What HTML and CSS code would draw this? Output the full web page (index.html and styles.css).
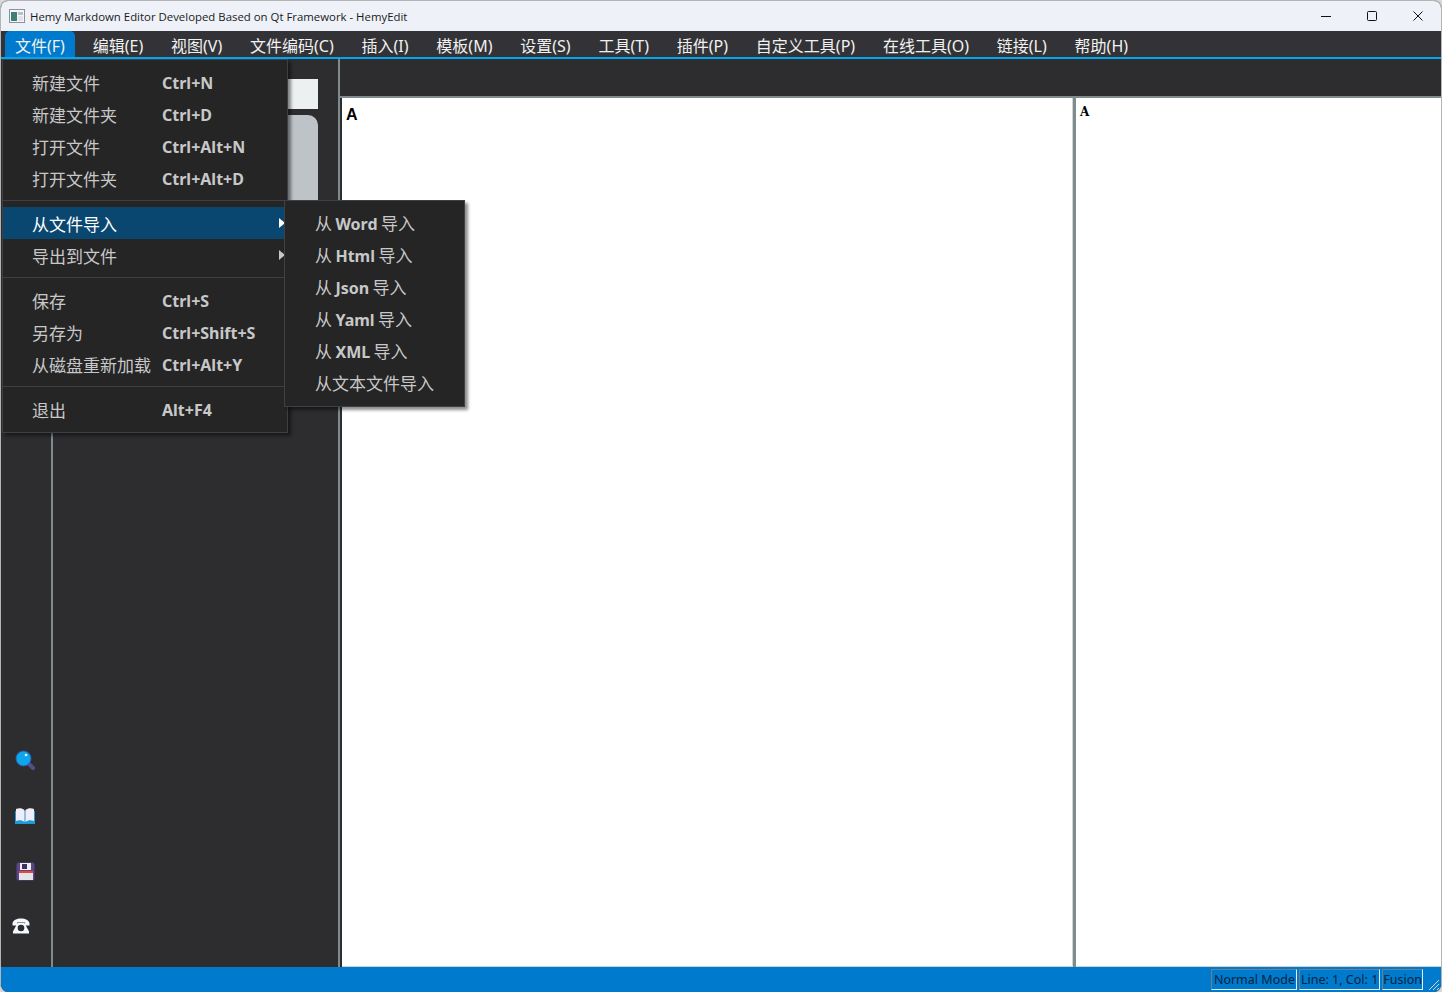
FILE: index.html
```html
<!DOCTYPE html>
<html lang="zh-CN">
<head>
  <meta charset="UTF-8">
  <title>HemyEdit</title>
  <link rel="stylesheet" href="styles.css">
</head>
<body>
  <div class="window">
    <div class="titlebar">
      <svg class="app-icon" width="16" height="14" viewBox="0 0 16 14">
        <rect x="0.5" y="0.5" width="15" height="13" fill="#f4f6f8" stroke="#8d9296"/>
        <rect x="2" y="3" width="6" height="9" fill="#3f7f78"/>
        <rect x="9" y="3" width="5" height="3" fill="#b9c2c8"/>
        <rect x="9" y="7" width="5" height="5" fill="#dfe4e8"/>
      </svg>
      <span class="title-text">Hemy Markdown Editor Developed Based on Qt Framework - HemyEdit</span>
      <div class="win-btns">
        <svg width="12" height="12" viewBox="0 0 12 12"><path d="M1 6.5h10" stroke="#111" fill="none"/></svg>
        <svg width="12" height="12" viewBox="0 0 12 12"><rect x="1.5" y="1.5" width="9" height="9" rx="1" stroke="#111" fill="none"/></svg>
        <svg width="12" height="12" viewBox="0 0 12 12"><path d="M1.5 1.5l9 9M10.5 1.5l-9 9" stroke="#111" fill="none"/></svg>
      </div>
    </div>

    <div class="menubar">
      <span class="menu-title active">文件(F)</span>
      <span class="menu-title">编辑(E)</span>
      <span class="menu-title">视图(V)</span>
      <span class="menu-title">文件编码(C)</span>
      <span class="menu-title">插入(I)</span>
      <span class="menu-title">模板(M)</span>
      <span class="menu-title">设置(S)</span>
      <span class="menu-title">工具(T)</span>
      <span class="menu-title">插件(P)</span>
      <span class="menu-title">自定义工具(P)</span>
      <span class="menu-title">在线工具(O)</span>
      <span class="menu-title">链接(L)</span>
      <span class="menu-title">帮助(H)</span>
    </div>

    <div class="main">
      <div class="rail">
        <svg width="22" height="22" viewBox="0 0 22 22">
          <path d="M13 13l6 6" stroke="#5b4a8c" stroke-width="4" stroke-linecap="round"/>
          <circle cx="9.5" cy="9.5" r="7.5" fill="#0ea5ec" stroke="#2b5fb0"/>
          <circle cx="12" cy="6" r="1.3" fill="#e8f7ff"/>
        </svg>
        <svg width="20" height="17" viewBox="0 0 20 17">
          <path d="M0 14V3h20v11z" fill="#1a9ad6"/>
          <path d="M1 13V1c3-1 6-1 8.500 1v12C7 12 4 12 1 13z" fill="#f1edf8"/>
          <path d="M19 13V1c-3-1-6-1-8.500 1v12c2.500-2 5.500-2 8.500-1z" fill="#f1edf8"/>
          <path d="M0 14h20v2H0z" fill="#1a9ad6"/>
        </svg>
        <svg width="19" height="19" viewBox="0 0 19 19">
          <rect x="0.500" y="0.500" width="18" height="18" rx="2" fill="#57478a"/>
          <rect x="4" y="1" width="11" height="7" fill="#f0edf6"/>
          <rect x="6" y="2" width="5" height="5" fill="#3d3262"/>
          <rect x="3" y="9" width="14" height="2" fill="#e8443c"/>
          <rect x="3" y="11" width="14" height="7" fill="#e4e4e8"/>
        </svg>
        <svg class="phone" width="18" height="16" viewBox="0 0 18 16">
          <path d="M0.500 6C0.500 2 5 0.500 9 0.500S17.500 2 17.500 6v1.500h-4.500V4.500H5v3H0.500z" fill="#f4f8ff"/>
          <path d="M5.500 5h7l4.500 8.500v2H1v-2z" fill="#f4f8ff"/>
          <circle cx="9" cy="10" r="3.300" fill="#2d2d30"/>
        </svg>
      </div>
      <div class="side-panel">
        <div class="side-input"></div>
        <div class="side-tree"></div>
      </div>
      <div class="work">
        <div class="toolbar"></div>
        <div class="panes">
          <div class="editor">A</div>
          <div class="preview">A</div>
        </div>
      </div>
    </div>

    <div class="statusbar">
      <span class="status-label mode">Normal Mode</span>
      <span class="status-label">Line: 1, Col: 1</span>
      <span class="status-label fusion">Fusion</span>
      <svg class="grip" width="14" height="14" viewBox="0 0 14 14">
        <path d="M13 3L3 13M13 7L7 13M13 11L11 13" stroke="#cfd8de" fill="none"/>
      </svg>
    </div>

    <div class="menu file-menu">
      <div class="menu-row"><span class="label">新建文件</span><span class="keys">Ctrl+N</span></div>
      <div class="menu-row"><span class="label">新建文件夹</span><span class="keys">Ctrl+D</span></div>
      <div class="menu-row"><span class="label">打开文件</span><span class="keys">Ctrl+Alt+N</span></div>
      <div class="menu-row"><span class="label">打开文件夹</span><span class="keys">Ctrl+Alt+D</span></div>
      <div class="sep"></div>
      <div class="menu-row current"><span class="label">从文件导入</span><span class="arrow"></span></div>
      <div class="menu-row"><span class="label">导出到文件</span><span class="arrow"></span></div>
      <div class="sep"></div>
      <div class="menu-row"><span class="label">保存</span><span class="keys">Ctrl+S</span></div>
      <div class="menu-row"><span class="label">另存为</span><span class="keys">Ctrl+Shift+S</span></div>
      <div class="menu-row"><span class="label">从磁盘重新加载</span><span class="keys">Ctrl+Alt+Y</span></div>
      <div class="sep"></div>
      <div class="menu-row"><span class="label">退出</span><span class="keys">Alt+F4</span></div>
    </div>

    <div class="menu sub-menu">
      <div class="menu-row">从 <b>Word</b> 导入</div>
      <div class="menu-row">从 <b>Html</b> 导入</div>
      <div class="menu-row">从 <b>Json</b> 导入</div>
      <div class="menu-row">从 <b>Yaml</b> 导入</div>
      <div class="menu-row">从 <b>XML</b> 导入</div>
      <div class="menu-row">从文本文件导入</div>
    </div>
  </div>
</body>
</html>
```

FILE: styles.css
```css
html, body {
  margin: 0;
  padding: 0;
  height: 100%;
  background: #d8d8d8;
  overflow: hidden;
}

.window {
  position: relative;
  display: flex;
  flex-direction: column;
  height: 992px;
  box-sizing: border-box;
  border: 1px solid #b4b4b4;
  border-bottom: 0;
  border-radius: 8px;
  overflow: hidden;
  background: #2d2d30;
  font-family: "Noto Sans", "Noto Sans CJK SC", sans-serif;
}

.titlebar {
  display: flex;
  align-items: center;
  height: 30px;
  background: #eef2f8;
  color: #1a1a1a;
  font-size: 12px;
  flex-shrink: 0;
}

.app-icon {
  margin-left: 8px;
  margin-right: 5px;
}

.title-text {
  flex: 1;
  font-family: "Open Sans", "Noto Sans", sans-serif;
  font-size: 11.4px;
}

.win-btns {
  display: flex;
  gap: 34px;
  margin-right: 17px;
}

.menubar {
  display: flex;
  gap: 7.8px;
  height: 26px;
  padding-left: 4px;
  background: #333337;
  border-bottom: 2px solid #00a8f0;
  flex-shrink: 0;
}

.menu-title {
  padding: 0 10px;
  color: #f1f1f1;
  font-size: 16px;
  line-height: 30px;
  height: 26px;
  white-space: nowrap;
}

.menu-title.active {
  background: #007acc;
  border-radius: 5px 5px 0 0;
}

.main {
  display: flex;
  flex: 1;
  min-height: 0;
}

.rail {
  display: flex;
  flex-direction: column;
  align-items: center;
  justify-content: flex-end;
  gap: 37px;
  width: 48px;
  padding: 0 2px 33px 0;
  border-right: 2px solid #7f8c8d;
}

.phone {
  margin-right: 8px;
}

.side-panel {
  display: flex;
  flex-direction: column;
  gap: 6px;
  width: 265px;
  padding: 20px 20px 0 0;
  border-right: 2px solid #7f8c8d;
}

.side-input {
  height: 30px;
  background: #ecf0f1;
}

.side-tree {
  height: 190px;
  background: #bdc3c7;
  border-radius: 0 10px 0 0;
}

.work {
  display: flex;
  flex-direction: column;
  flex: 1;
  min-width: 0;
}

.toolbar {
  height: 37px;
  background: #2d2d30;
  border-bottom: 2px solid #7f8c8d;
  flex-shrink: 0;
}

.panes {
  display: flex;
  flex: 1;
  gap: 3px;
  padding-left: 2px;
  background: linear-gradient(to right, #2d2d30 2px, #7f8c8d 2px);
}

.editor {
  width: 731px;
  padding: 7px 4px;
  box-sizing: border-box;
  background: #fff;
  border-bottom: 1px solid #cfd4d4;
  border-right: 1px solid #cfd4d4;
  color: #000;
  font-family: "Liberation Sans", sans-serif;
  font-size: 16px;
  font-weight: bold;
  line-height: 20px;
}

.preview {
  flex: 1;
  padding: 5px 4px;
  background: #fff;
  border-bottom: 1px solid #cfd4d4;
  color: #000;
  font-family: "DejaVu Serif", serif;
  font-size: 12px;
  font-weight: bold;
  line-height: 18px;
}

.statusbar {
  position: relative;
  display: flex;
  align-items: center;
  justify-content: flex-end;
  gap: 2px;
  height: 25px;
  padding-right: 18px;
  background: #007acc;
  flex-shrink: 0;
}

.status-label {
  height: 19px;
  padding: 0 1px;
  border: 1px solid;
  border-color: #6a7f90 #e6eef4 #e6eef4 #6a7f90;
  color: #06233f;
  font-size: 12.5px;
  line-height: 20px;
  white-space: nowrap;
}

.status-label.mode {
  padding: 0 1px 0 2px;
}

.status-label.fusion {
  padding: 0;
}

.grip {
  position: absolute;
  right: 1px;
  bottom: 1px;
}

.menu {
  position: absolute;
  box-sizing: border-box;
  background: #252526;
  border: 1px solid #3f3f46;
  box-shadow: 3px 3px 3px rgba(0, 0, 0, 0.45);
  color: #c8c8c8;
}

.file-menu {
  top: 58px;
  left: 1px;
  width: 286px;
  height: 374px;
  padding-top: 6px;
  font-size: 17px;
}

.sub-menu {
  top: 199px;
  left: 283px;
  width: 181px;
  height: 207px;
  padding-top: 7px;
  font-size: 17px;
}

.menu-row {
  position: relative;
  display: flex;
  align-items: center;
  gap: 4px;
  height: 32px;
  padding-left: 29px;
  white-space: pre;
}

.sub-menu .menu-row {
  display: block;
  padding-left: 30px;
  line-height: 32px;
  word-spacing: -1px;
}

.sub-menu b {
  font-size: 16px;
  font-weight: 700;
}

.label {
  width: 126px;
}

.keys {
  margin-top: 2px;
  font-size: 16px;
  font-weight: 700;
}

.menu-row.current {
  background: #094771;
  color: #fff;
}

.arrow {
  position: absolute;
  right: 2px;
  top: 11px;
  width: 0;
  height: 0;
  border-left: 6px solid #c8c8c8;
  border-top: 5px solid transparent;
  border-bottom: 5px solid transparent;
}

.current .arrow {
  border-left-color: #fff;
}

.sep {
  height: 1px;
  margin: 6px 0;
  background: #3f3f46;
}
```
